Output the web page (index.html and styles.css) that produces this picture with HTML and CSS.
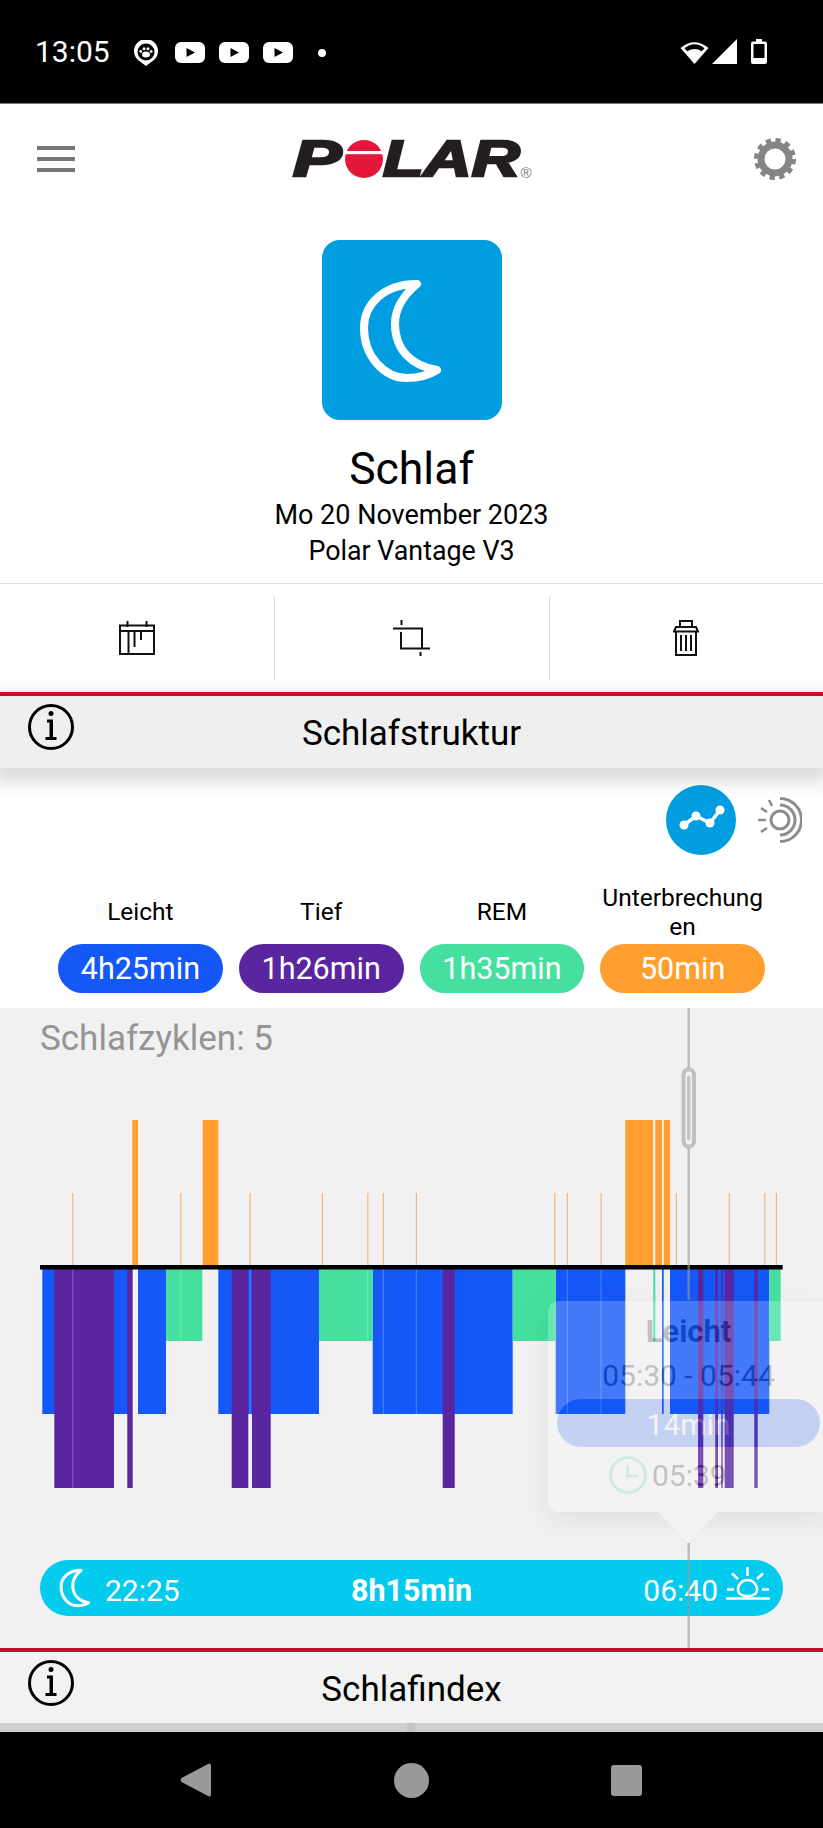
FILE: index.html
```html
<!DOCTYPE html>
<html lang="de">
<head>
    <meta charset="UTF-8">
    <title>Schlaf</title>
    <link rel="stylesheet" href="styles.css">
</head>
<body>
<div id="screen">
    <!--status bar-->
    <div class="statusbar">
        <span class="clock">13:05</span>
        <svg class="pin" viewBox="0 0 24 26">
            <path d="M12 26 L4 20 A12 12 0 1 1 20 20 Z" fill="#fff"/>
            <circle cx="12" cy="12" r="8.5" fill="#000"/>
            <ellipse cx="12" cy="14.5" rx="4" ry="3" fill="#fff"/>
            <circle cx="6.8" cy="11.5" r="1.4" fill="#fff"/>
            <circle cx="10" cy="8.8" r="1.5" fill="#fff"/>
            <circle cx="14" cy="8.8" r="1.5" fill="#fff"/>
            <circle cx="17.2" cy="11.5" r="1.4" fill="#fff"/>
        </svg>
        <svg class="yt" viewBox="0 0 30 21"><rect width="30" height="21" rx="6" fill="#fff"/><path d="M11.5 6 L20 10.5 L11.5 15 Z" fill="#000"/></svg>
        <svg class="yt" viewBox="0 0 30 21"><rect width="30" height="21" rx="6" fill="#fff"/><path d="M11.5 6 L20 10.5 L11.5 15 Z" fill="#000"/></svg>
        <svg class="yt" viewBox="0 0 30 21"><rect width="30" height="21" rx="6" fill="#fff"/><path d="M11.5 6 L20 10.5 L11.5 15 Z" fill="#000"/></svg>
        <span class="dot"></span>
        <svg class="sys-wifi" viewBox="0 0 29 24">
            <path d="M0.5 8 Q14.5 -3.5 28.500 8 L14.500 24 Z" fill="#fff"/>
            <path d="M4.500 8.200 Q14.500 0.500 24.500 8.200 L21.800 11.300 Q14.500 6.500 7.200 11.300 Z" fill="#000"/>
        </svg>
        <svg class="sys-signal" viewBox="0 0 25 25"><path d="M0 25 L25 0 V25 Z" fill="#fff"/></svg>
        <svg class="sys-battery" viewBox="0 0 16 25">
            <path d="M5 0 H11 V2.500 H14 Q16 2.500 16 4.500 V23 Q16 25 14 25 H2 Q0 25 0 23 V4.500 Q0 2.500 2 2.500 H5 Z" fill="#fff"/>
            <rect x="2.500" y="5" width="11" height="14" fill="#000"/>
        </svg>
    </div>

    <!--top bar-->
    <div class="topbar">
        <div class="burger"><span></span><span></span><span></span></div>
        <div class="logo">
            <span class="logo-p">P</span>
            <svg class="logo-o" viewBox="0 0 38 38">
                <circle cx="19" cy="19" r="19" fill="#e2173a"/>
                <rect y="11" width="38" height="3.200" fill="#fff"/>
            </svg>
            <span class="logo-lar">LAR</span>
            <span class="logo-r">®</span>
        </div>
        <svg class="gear" viewBox="0 0 42 42">
            <circle cx="21" cy="21" r="14" fill="none" stroke="#858585" stroke-width="7"/>
            <circle cx="21" cy="21" r="18.500" fill="none" stroke="#858585" stroke-width="5" stroke-dasharray="5.200 4.480"/>
        </svg>
    </div>

    <!--hero-->
    <div class="hero">
        <div class="tile">
            <svg viewBox="0 0 180 180" width="180" height="180">
                <path class="moon" d="M95 44 C62 44 42 64 42 88 C42 116 62 138 85 138 C96 138 107 135 115 130 C90 126 73 110 73 84 C73 68 83 54 95 44 Z"/>
            </svg>
        </div>
        <h1 class="hero-title">Schlaf</h1>
        <div class="hero-line first">Mo 20 November 2023</div>
        <div class="hero-line device">Polar Vantage V3</div>
    </div>

    <!--actions-->
    <div class="actions">
        <div class="action">
            <svg width="36" height="34" viewBox="0 0 36 34" class="line-icon">
                <path d="M1 4.500 H35 V33 H1 Z M1 10 H35 M9.500 10 V33 M15.500 10 V26 M22 10 V19 M8.500 0 V6 M27.500 0 V6"/>
            </svg>
        </div>
        <div class="action">
            <svg width="37" height="36" viewBox="0 0 37 36" class="line-icon">
                <path d="M0 8.500 H29 V28.500 M8 12 V28.500 H37 M8.500 0 V5 M27.500 32 V36"/>
            </svg>
        </div>
        <div class="action">
            <svg width="26" height="36" viewBox="0 0 26 36" class="line-icon">
                <path d="M7 7 V1 H19 V7 M1 11.500 L3 7 H23 L25 11.500 Z M3 11.500 V35 H23 V11.500 M8 15 V31 M13 15 V31 M18 15 V31"/>
            </svg>
        </div>
    </div>

    <!--Schlafstruktur-->
    <div class="section-head raised">
        <svg class="info" viewBox="0 0 46 46">
            <circle cx="23" cy="23" r="21.500" fill="none" stroke="#000" stroke-width="3"/>
            <circle cx="23" cy="9.500" r="2.500"/>
            <path d="M19 15.500 H25 V33 H28.500 V36 H17.500 V33 H21.500 V18.500 H19 Z"/>
        </svg>
        <h2>Schlafstruktur</h2>
    </div>

    <div class="toggle-row">
        <div class="toggle-on">
            <svg width="70" height="70" viewBox="0 0 70 70">
                <path d="M18 40 L30 31 L44 38 L54 25" fill="none" stroke="#fff" stroke-width="3.500"/>
                <circle cx="18" cy="40" r="4.500" fill="#fff"/>
                <circle cx="30" cy="31" r="4.500" fill="#fff"/>
                <circle cx="44" cy="38" r="4.500" fill="#fff"/>
                <circle cx="54" cy="25" r="4.500" fill="#fff"/>
            </svg>
        </div>
        <svg class="toggle-off" width="44" height="46" viewBox="0 0 44 46">
            <circle cx="22" cy="23" r="9" fill="none" stroke="#8c8c8c" stroke-width="3"/>
            <path d="M22 8 A15 15 0 0 1 22 38" fill="none" stroke="#8c8c8c" stroke-width="3"/>
            <path d="M22 1.500 A21.500 21.500 0 0 1 22 44.500" fill="none" stroke="#8c8c8c" stroke-width="3"/>
            <path d="M0 23 H8 M3 11 L9 15 M3 35 L9 31 M11 3 L14 9" stroke="#8c8c8c" stroke-width="2.500"/>
        </svg>
    </div>

    <div class="phases">
        <div class="phase"><div class="phase-label">Leicht</div><div class="phase-pill light">4h25min</div></div>
        <div class="phase"><div class="phase-label">Tief</div><div class="phase-pill deep">1h26min</div></div>
        <div class="phase"><div class="phase-label">REM</div><div class="phase-pill rem">1h35min</div></div>
        <div class="phase"><div class="phase-label">Unterbrechungen</div><div class="phase-pill wake">50min</div></div>
    </div>

    <!--chart-->
    <div class="chart">
        <div class="cycles">Schlafzyklen: 5</div>

        <div class="range">
            <div class="range-side">
                <svg class="range-moon" viewBox="34 36 90 110">
                    <path class="moon" d="M95 44 C62 44 42 64 42 88 C42 116 62 138 85 138 C96 138 107 135 115 130 C90 126 73 110 73 84 C73 68 83 54 95 44 Z"/>
                </svg>
                <span>22:25</span>
            </div>
            <b class="range-total">8h15min</b>
            <div class="range-side end">
                <span>06:40</span>
                <svg class="range-sun" viewBox="0 0 45 33">
                    <path d="M1 31.500 H45 M2 22.500 H9 M37 22.500 H44 M13 22.500 A9 9 0 0 1 32 22.500 Q32 29 22.500 29 Q13 29 13 22.500 Z M22.500 0 V9 M7 6.500 L13 12 M38 6.500 L32 12" fill="none" stroke="#fff" stroke-width="2.500"/>
                </svg>
            </div>
        </div>

        <!-- viewBox uses page coordinates -->
        <svg class="plot" viewBox="0 1008 823 640">
            <g class="awake">
                <rect x="132.300" y="1120" width="5.700" height="146"/>
                <rect x="202.700" y="1120" width="15.600" height="146"/>
                <rect x="625.300" y="1120" width="27.700" height="146"/>
                <rect x="655.300" y="1120" width="6.700" height="146"/>
                <rect x="663.700" y="1120" width="6.300" height="146"/>
            </g>
            <g class="awake-thin">
                <rect x="72.200" y="1193" width="1.200" height="73"/>
                <rect x="180.200" y="1193" width="1.200" height="73"/>
                <rect x="249.500" y="1193" width="1.200" height="73"/>
                <rect x="321.800" y="1193" width="1.200" height="73"/>
                <rect x="367.200" y="1193" width="1.200" height="73"/>
                <rect x="382.800" y="1193" width="1.200" height="73"/>
                <rect x="415.800" y="1193" width="1.200" height="73"/>
                <rect x="554.200" y="1193" width="1.200" height="73"/>
                <rect x="566.800" y="1193" width="1.200" height="73"/>
                <rect x="600.500" y="1193" width="1.200" height="73"/>
                <rect x="675.800" y="1193" width="1.200" height="73"/>
                <rect x="728.800" y="1193" width="1.200" height="73"/>
                <rect x="764.200" y="1193" width="1.200" height="73"/>
                <rect x="775.800" y="1193" width="1.200" height="73"/>
            </g>
            <g class="light-bar">
                <rect x="42.300" y="1269" width="85.700" height="145"/>
                <rect x="138" y="1269" width="28" height="145"/>
                <rect x="218.300" y="1269" width="100.700" height="145"/>
                <rect x="372.700" y="1269" width="140" height="145"/>
                <rect x="555.700" y="1269" width="69.600" height="145"/>
                <rect x="662" y="1269" width="1.700" height="145"/>
                <rect x="670" y="1269" width="99.300" height="145"/>
            </g>
            <g class="rem-bar">
                <rect x="166" y="1269" width="36.300" height="72"/>
                <rect x="319" y="1269" width="53.700" height="72"/>
                <rect x="512.700" y="1269" width="43" height="72"/>
                <rect x="653.300" y="1269" width="2" height="72"/>
                <rect x="769.300" y="1269" width="11.400" height="72"/>
            </g>
            <g class="deep-bar">
                <rect x="54.300" y="1269" width="59.700" height="219"/>
                <rect x="127.300" y="1269" width="5.400" height="219"/>
                <rect x="231.700" y="1269" width="16.600" height="219"/>
                <rect x="252" y="1269" width="18.700" height="219"/>
                <rect x="442.700" y="1269" width="12" height="219"/>
                <rect x="698" y="1269" width="5.300" height="219"/>
                <rect x="715.300" y="1269" width="2.700" height="219"/>
                <rect x="721.300" y="1269" width="1.400" height="219"/>
                <rect x="724.700" y="1269" width="9" height="219"/>
                <rect x="754.300" y="1269" width="3.400" height="219"/>
            </g>
            <g class="seam">
                <rect x="72.200" y="1269" width="1" height="219"/>
                <rect x="180.200" y="1269" width="1" height="72"/>
                <rect x="249.500" y="1269" width="1" height="145"/>
                <rect x="367.200" y="1269" width="1" height="72"/>
                <rect x="382.800" y="1269" width="1" height="145"/>
                <rect x="415.800" y="1269" width="1" height="145"/>
                <rect x="566.800" y="1269" width="1" height="145"/>
                <rect x="600.500" y="1269" width="1" height="145"/>
            </g>
            <rect class="axis" x="40" y="1265" width="742.700" height="4.500"/>
            <path class="cursor" d="M688.700 1008 V1070 M688.700 1146 V1300 M688.700 1543 V1648"/>
            <rect class="handle" x="683.500" y="1069.500" width="10.500" height="77" rx="5.250"/>
            <path class="handle-core" d="M688.700 1076 V1140"/>
        </svg>

        <div class="tooltip">
            <b class="tip-title">Leicht</b>
            <div class="tip-time">05:30 - 05:44</div>
            <div class="tip-pill">14min</div>
            <div class="tip-at">
                <svg width="38" height="38" viewBox="0 0 38 38">
                    <circle cx="19" cy="19" r="17.500" fill="none" stroke="#45e09f" stroke-width="3"/>
                    <path d="M18.500 9 V20 H29" fill="none" stroke="#45e09f" stroke-width="3"/>
                </svg>
                <span>05:39</span>
            </div>
            <span class="tip-arrow"></span>
        </div>
    </div>

    <!--Schlafindex-->
    <div class="section-head pale">
        <svg class="info" viewBox="0 0 46 46">
            <circle cx="23" cy="23" r="21.500" fill="none" stroke="#000" stroke-width="3"/>
            <circle cx="23" cy="9.500" r="2.500"/>
            <path d="M19 15.500 H25 V33 H28.500 V36 H17.500 V33 H21.500 V18.500 H19 Z"/>
        </svg>
        <h2>Schlafindex</h2>
    </div>
    <div class="peek"><span></span></div>

    <!--nav-->
    <div class="navbar">
        <svg width="31" height="34" viewBox="0 0 31 34"><path d="M29 0.500 Q31 0 31 3 V31 Q31 34 29 33.500 L1.500 19 Q0 17 1.500 15 Z" fill="#999"/></svg>
        <span class="nav-home"></span>
        <span class="nav-recent"></span>
    </div>
</div>
</body>
</html>
```

FILE: styles.css
```css
*{
    margin: 0;
    padding: 0;
    box-sizing: border-box;
}
html,body{
    background: #fff;
}
body{
    font-family: Roboto, "Liberation Sans", sans-serif;
    color: #000;
}
#screen{
    width: 823px;
    height: 1828px;
    overflow: hidden;
}

/* status bar */
.statusbar{
    height: 104px;
    background: #000;
    border-bottom: 1px solid #777;
    display: flex;
    align-items: flex-start;
    color: #fff;
    padding: 39px 56px 0 35px;
}
.clock{
    font-size: 30px;
    line-height: 26px;
    width: 99px;
}
.pin{
    width: 24px;
    height: 26px;
    margin: 1px 17px 0 0;
}
.yt{
    width: 30px;
    height: 21px;
    margin: 3px 14px 0 0;
}
.dot{
    width: 8px;
    height: 8px;
    border-radius: 50%;
    background: #fff;
    margin: 10px 0 0 11px;
}
.sys-wifi{
    width: 29px;
    height: 24px;
    margin: 1px 3px 0 auto;
}
.sys-signal{
    width: 25px;
    height: 25px;
    margin-right: 14px;
}
.sys-battery{
    width: 16px;
    height: 25px;
}

/* top bar */
.topbar{
    height: 136px;
    display: flex;
    justify-content: space-between;
    padding: 34px 27px 0 37px;
}
.burger{
    width: 38px;
    height: 26px;
    margin-top: 8px;
    display: flex;
    flex-direction: column;
    justify-content: space-between;
}
.burger span{
    height: 4px;
    background: #777;
}
.logo{
    width: 240px;
    height: 38px;
    margin: 2px 0 0 -4px;
    display: flex;
    color: #231f20;
    font-family: "Liberation Sans", sans-serif;
    font-weight: bold;
    font-style: italic;
    font-size: 50px;
    line-height: 38px;
    -webkit-text-stroke: 2.5px #231f20;
}
.logo-p{
    width: 52px;
    display: inline-block;
    transform: scaleX(1.45);
    transform-origin: left center;
}
.logo-o{
    width: 38px;
    height: 38px;
    flex-shrink: 0;
}
.logo-lar{
    width: 137px;
    display: inline-block;
    transform: scaleX(1.33);
    transform-origin: left center;
}
.logo-r{
    font-size: 15px;
    font-weight: normal;
    font-style: normal;
    line-height: 13px;
    margin: 26px 0 0 1px;
    color: #777;
    -webkit-text-stroke: 0;
}
.gear{
    width: 42px;
    height: 42px;
}

/* hero */
.hero{
    height: 343px;
    display: flex;
    flex-direction: column;
    align-items: center;
}
.tile{
    width: 180px;
    height: 180px;
    border-radius: 18px;
    background: #009ee0;
    flex-shrink: 0;
}
.moon{
    fill: none;
    stroke: #fff;
    stroke-width: 8;
    stroke-linejoin: round;
}
.hero-title{
    font-size: 44.500px;
    font-weight: normal;
    line-height: 50px;
    margin-top: 24px;
}
.hero-line{
    font-size: 27px;
    line-height: 36px;
}
.hero-line.first{
    margin-top: 3px;
}
.hero-line.device{
    font-size: 26.800px;
}

/* actions */
.actions{
    height: 109px;
    border-top: 1px solid #ddd;
    padding: 12px 0;
    display: grid;
    grid-template-columns: 1fr 1fr 1fr;
}
.action{
    display: flex;
    align-items: center;
    justify-content: center;
}
.action + .action{
    border-left: 1px solid #ddd;
}
.line-icon{
    fill: none;
    stroke: #111;
    stroke-width: 2;
}

/* section heads */
.section-head{
    height: 76px;
    border-top: 4.5px solid #c8102e;
    background: #efefef;
    display: grid;
    grid-template-columns: 1fr auto 1fr;
    position: relative;
    z-index: 2;
}
.section-head.raised{
    box-shadow: 0 8px 16px 6px rgba(0,0,0,.14);
}
.section-head.pale{
    height: 75px;
    background: #f2f2f2;
}
.info{
    width: 46px;
    height: 46px;
    margin: 8px 0 0 28px;
}
.section-head h2{
    font-size: 35px;
    font-weight: normal;
    line-height: 40px;
    margin-top: 18px;
}
.section-head.pale h2{
    margin-top: 18px;
}

/* toggle + phases */
.toggle-row{
    display: flex;
    justify-content: flex-end;
    align-items: center;
    gap: 22px;
    padding: 17px 21px 0 0;
}
.toggle-on{
    width: 70px;
    height: 70px;
    border-radius: 50%;
    background: #009ee0;
}
.phases{
    display: grid;
    grid-template-columns: repeat(4, 1fr);
    gap: 16px;
    padding: 27px 58px 15px;
}
.phase-label{
    height: 58px;
    padding-top: 1px;
    font-size: 24.500px;
    line-height: 29px;
    text-align: center;
    overflow-wrap: anywhere;
    display: flex;
    align-items: center;
    justify-content: center;
}
.phase-pill{
    height: 49px;
    margin-top: 4px;
    border-radius: 25px;
    color: #fff;
    font-size: 30.500px;
    line-height: 49px;
    text-align: center;
}
.light{ background: #1558f8; }
.deep{ background: #5a26a0; }
.rem{ background: #45e09f; }
.wake{ background: #ff9f2f; }

/* chart */
.chart{
    height: 640px;
    background: #f1f1f1;
    position: relative;
    display: flex;
    flex-direction: column;
    justify-content: space-between;
    padding: 11px 40px 32px;
}
.cycles{
    font-size: 35px;
    line-height: 40px;
    color: #949494;
}
.plot{
    position: absolute;
    left: 0;
    top: 0;
    width: 823px;
    height: 640px;
}
.awake{ fill: #ff9f2f; }
.awake-thin{ fill: #f7b679; }
.light-bar{ fill: #1558f8; }
.rem-bar{ fill: #45e09f; }
.deep-bar{ fill: #5a26a0; }
.seam{ fill: rgba(255,255,255,.25); }
.axis{ fill: #000; }
.cursor{
    stroke: rgba(153,153,153,.6);
    stroke-width: 2.500;
    fill: none;
}
.handle{
    fill: #f1f1f1;
    stroke: #c0c0c0;
    stroke-width: 4;
}
.handle-core{
    stroke: #c4c4c4;
    stroke-width: 3.500;
}

/* bottom range pill */
.range{
    height: 56px;
    border-radius: 28px;
    background: #03cbee;
    color: #fff;
    font-size: 30px;
    display: grid;
    grid-template-columns: 1fr auto 1fr;
    align-items: center;
    padding: 4px 13px 0;
}
.range-side{
    display: flex;
    align-items: center;
    gap: 13px;
}
.range-side.end{
    justify-content: flex-end;
    gap: 7px;
}
.range-moon{
    width: 34px;
    height: 42px;
    margin: 0 0 4px 5px;
}
.range-total{
    font-size: 30.500px;
}
.range-sun{
    width: 45px;
    height: 33px;
    margin-bottom: 14px;
}

/* tooltip, over the bars */
.tooltip{
    position: absolute;
    left: 548px;
    top: 293px;
    width: 275px;
    height: 211px;
    border-radius: 10px 0 0 10px;
    background: #fff;
    box-shadow: 0 8px 26px rgba(0,0,0,.35);
    opacity: .2;
    text-align: center;
    padding-left: 9px;
    font-size: 30px;
    color: #000;
}
.tip-title{
    display: block;
    font-size: 31px;
    line-height: 36px;
    margin-top: 13px;
    width: 263px;
}
.tip-time{
    line-height: 36px;
    margin-top: 8px;
    width: 263px;
}
.tip-pill{
    width: 263px;
    height: 48px;
    margin-top: 5px;
    border-radius: 24px;
    background: #1558f8;
    color: #fff;
    line-height: 52px;
}
.tip-at{
    display: flex;
    align-items: center;
    gap: 5px;
    margin: 9px 0 0 52px;
    height: 38px;
}
.tip-arrow{
    position: absolute;
    left: 110px;
    top: 211px;
    width: 0;
    height: 0;
    border-left: 30px solid transparent;
    border-right: 30px solid transparent;
    border-top: 30px solid #fff;
}

/* bottom */
.peek{
    height: 9px;
    background: #cfcfcf;
}
.peek span{
    display: block;
    width: 8px;
    height: 9px;
    margin-left: 407px;
    background: #c4c4c4;
}
.navbar{
    height: 96px;
    background: #000;
    display: flex;
    align-items: center;
    padding: 0 181px 0 180px;
    justify-content: space-between;
}
.nav-home{
    width: 35px;
    height: 35px;
    border-radius: 50%;
    background: #999;
}
.nav-recent{
    width: 31px;
    height: 31px;
    border-radius: 3px;
    background: #999;
}
```
